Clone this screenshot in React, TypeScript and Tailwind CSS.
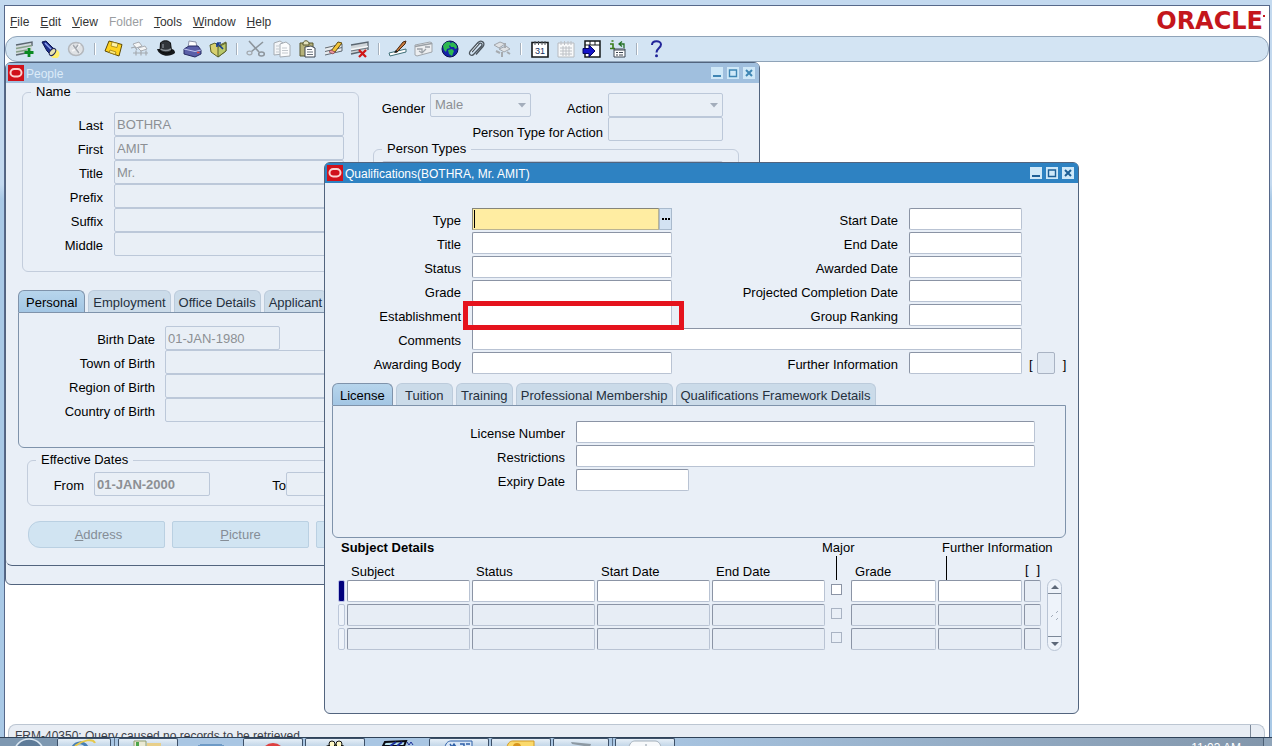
import type { ReactNode } from 'react';

const FIELD =
  'block h-[22px] w-full rounded-xs border border-[#b9c3d3] border-t-[#8b94a5] border-l-[#8b94a5] bg-white px-[2px] outline-none';
const LOCKED =
  'block h-6 rounded-xs border border-[#bcc8d9] bg-[#e9eff6] px-[2px] text-[#8c8f94] outline-none';

const qualLeft = ['Type', 'Title', 'Status', 'Grade', 'Establishment', 'Comments', 'Awarding Body'];
const qualRight: Record<string, string> = {
  Type: 'Start Date',
  Title: 'End Date',
  Status: 'Awarded Date',
  Grade: 'Projected Completion Date',
  Establishment: 'Group Ranking',
  'Awarding Body': 'Further Information',
};

const slug = (s: string) => s.toLowerCase().replace(/\W+/g, '-');

function Icon({ children }: { children: ReactNode }) {
  return (
    <svg width="20" height="18" viewBox="0 0 20 18" fill="none" aria-hidden="true">
      {children}
    </svg>
  );
}

const toolGroups: { name: string; art: ReactNode }[][] = [
  [
    {
      name: 'New',
      art: (
        <>
          <path d="M2 5 18 2v10L2 15z" fill="#d3dade" />
          <path d="M2 5 18 2v4M2 15l10-2" stroke="#5b6670" strokeWidth="1.400" />
          <path d="M2 8.500 18 5.500M2 12l11-2" stroke="#86a08a" strokeWidth="1.400" />
          <path d="M15 8v9M10.500 12.500h9" stroke="#0b8a22" strokeWidth="2.800" />
        </>
      ),
    },
    {
      name: 'Find',
      art: (
        <>
          <circle cx="15" cy="14" r="4.500" fill="#ffee6a" />
          <path d="m2 2 4-1 8 8-4 5-3-3z" fill="#1e2f8c" stroke="#0c1550" />
          <path d="m5 3 7 7" stroke="#8fa4f0" strokeWidth="1.500" />
          <ellipse cx="12.500" cy="12" rx="2.500" ry="4" transform="rotate(40 12.500 12)" fill="#e8e3b0" stroke="#20285c" />
        </>
      ),
    },
    {
      name: 'Show Navigator',
      art: (
        <>
          <ellipse cx="10" cy="9" rx="7.500" ry="6.500" fill="#dfe2e5" stroke="#b4b8bd" strokeWidth="1.500" />
          <path d="m6 5 4 4-4 2M14 4l-4 5 4 4" stroke="#f6f7f8" strokeWidth="1.600" />
          <path d="m7 5 6 8M9 9l3-4" stroke="#a3a8ae" strokeWidth="1.500" />
        </>
      ),
    },
  ],
  [
    {
      name: 'Save',
      art: (
        <>
          <path d="M5 1 18 4.500 15 16 1 11z" fill="#ffd21f" stroke="#5d4a05" />
          <path d="m8 2 6 1.500-1 4-6-1.500z" fill="#fff3a6" stroke="#94760c" strokeWidth=".7" />
          <path d="m6 10 6 2-.8 2.500-6-2z" fill="#fbe67a" stroke="#94760c" strokeWidth=".7" />
        </>
      ),
    },
    {
      name: 'Next Step',
      art: (
        <>
          <path d="m3 4 6-2 3 4-6 2zM8 8l7-2 2 3-6 2z" fill="#f4f5f6" stroke="#a9adb3" />
          <path d="m1 8 4-1 2 3M3 13h15M6 10.500v5M11 10.500v5M16 10.500v5" stroke="#a4a9af" strokeWidth="1.200" />
        </>
      ),
    },
    {
      name: 'Switch Responsibility',
      art: (
        <>
          <path d="M1 9c2 7 12 9 18 4 0-2-1-4-4-4z" fill="#15181b" />
          <path d="M4 11 4.500 3c2-3 8-3 10 0l1 8c-3 3-8 2-11.500 0z" fill="#30353a" stroke="#08090a" />
          <path d="M4.500 9c3 2 7 2 10.500 0" stroke="#899097" strokeWidth="1.500" />
          <path d="M7 4v4" stroke="#9aa1a8" />
        </>
      ),
    },
    {
      name: 'Print',
      art: (
        <>
          <path d="m7 1 7 1 1 6H6z" fill="#fff" stroke="#8d93a8" />
          <path d="m2 9 5-3h9l3 4v4l-6 3-11-3z" fill="#5a5fa8" stroke="#272b63" />
          <path d="m2 9 11 2.500L19 10" stroke="#c2c6ef" />
          <path d="M15 12.500h2.500" stroke="#e5483f" strokeWidth="1.500" />
        </>
      ),
    },
    {
      name: 'Close Form',
      art: (
        <>
          <path d="m2 5 5-2 3 3 8-4v9l-8 6-7-5z" fill="#d8d06e" stroke="#59612c" />
          <path d="m10 7 8-4v8l-8 6z" fill="#b9c86a" stroke="#59612c" />
          <path d="m9 3 6 6M9 3h4M9 3v4" stroke="#1b3f8f" strokeWidth="1.700" />
        </>
      ),
    },
  ],
  [
    {
      name: 'Cut',
      art: (
        <>
          <path d="m3 1 10 11M17 2 5 12" stroke="#8d959c" strokeWidth="1.600" />
          <ellipse cx="3.500" cy="13" rx="2.500" ry="1.800" stroke="#a5abb1" strokeWidth="1.300" />
          <ellipse cx="15.500" cy="14" rx="2.800" ry="2" stroke="#8d959c" strokeWidth="1.500" />
        </>
      ),
    },
    {
      name: 'Copy',
      art: (
        <>
          <path d="M2 3 8 1l3 2v11l-9 1z" fill="#f4f6f8" stroke="#a5acb3" />
          <path d="m8 4 6-2 4 3v11l-10 1z" fill="#fbfcfd" stroke="#a5acb3" />
          <path d="M4 6h3M4 9h3M4 12h3M10 8h5M10 10.500h6M10 13h6" stroke="#c4c9ce" />
        </>
      ),
    },
    {
      name: 'Paste',
      art: (
        <>
          <path d="M2 3h13v13H2z" fill="#b5b27a" stroke="#56572f" />
          <path d="M5 3c1-3 5-3 6 0v2H5z" fill="#e3e2bd" stroke="#56572f" />
          <path d="m7 7 6-1 4 2v9H7z" fill="#fff" stroke="#3d4550" />
          <path d="M9 9.500h5M9 12h6M9 14.500h6" stroke="#6b7480" />
        </>
      ),
    },
    {
      name: 'Clear Record',
      art: (
        <>
          <path d="m1 7 17-4v8L1 15z" fill="#e8ebee" />
          <path d="m1 8 17-4v7M1 11.500l17-4M1 15l17-4" stroke="#5d6872" />
          <path d="m7 11 7-9 4 1-7 9z" fill="#f1c43c" stroke="#5f4a12" />
          <path d="m5 12 2-2 4 2-2 2z" fill="#eb9aa3" stroke="#8a4048" strokeWidth=".7" />
        </>
      ),
    },
    {
      name: 'Delete Record',
      art: (
        <>
          <path d="m1 5 17-3v9L1 14z" fill="#cfd5d9" />
          <path d="m1 5 17-3v8M1 14l9-2" stroke="#5b6670" strokeWidth="1.300" />
          <path d="m1 9.500 17-3" stroke="#f5f7f8" strokeWidth="1.500" />
          <path d="m1 11 17-3" stroke="#68737d" />
          <path d="m9 10 7 7m0-7-7 7" stroke="#cf1616" strokeWidth="2.300" />
        </>
      ),
    },
  ],
  [
    {
      name: 'Edit Field',
      art: (
        <>
          <path d="m1 13 17-4v3L2 16z" fill="#fff" stroke="#3f6f77" />
          <path d="m7 12 8-10 3-1-1 3-8 8z" fill="#c7793c" stroke="#4a2a12" />
          <path d="m6 13 2-3 2 2z" fill="#1a1a1a" />
        </>
      ),
    },
    {
      name: 'Zoom',
      art: (
        <>
          <path d="m1 5 15-3 2 1v9L3 16l-2-1z" fill="#eceef0" stroke="#9fa5ab" />
          <path d="M1 6.500 18 3.500M3 9l5 0v4M5 11l3 2 4-4M11 7h5" stroke="#9aa0a6" strokeWidth="1.300" />
        </>
      ),
    },
    {
      name: 'Translations',
      art: (
        <>
          <circle cx="10" cy="9" r="8" fill="#1523a8" stroke="#0a1050" />
          <path d="M3 6c1-3 4-5 7-4l1 2-2 2 1 2-3 1-1 3-2-2zM12 2c3 1 5 3 5 6l-2 1-1-2-3 0-1-2zM8 10l4-1 2 2-2 5-3-2z" fill="#2cb850" />
        </>
      ),
    },
    {
      name: 'Attachments',
      art: (
        <>
          <path
            d="m6 12 7-8c1.500-2 4 0 2.500 2L8 14c-2 2.500-6 1-4-2.500l8-9c3-3 8 0 5 4l-7 8"
            stroke="#4b545c"
            strokeWidth="1.300"
          />
          <path d="m5 12 7-8" stroke="#f4f7f9" strokeWidth=".8" />
        </>
      ),
    },
    {
      name: 'Folder Tools',
      art: (
        <>
          <path d="m2 5 6-3 5 2-6 4zM7 9l7-3 4 3-6 3z" fill="#dfe2e5" stroke="#a0a5ab" />
          <path d="M13 3v5M10 12v5M15 12l3 2M4 11l4 2" stroke="#a6abb0" strokeWidth="2" />
        </>
      ),
    },
  ],
  [
    {
      name: 'Calendar',
      art: (
        <>
          <path d="M2 2.500h16V17H2z" fill="#fff" stroke="#15181b" strokeWidth="1.600" />
          <path d="M5 1v4M8.500 1v4M12 1v4M15 1v4" stroke="#4e555c" />
          <text x="5" y="14" fontSize="9" fontFamily="Liberation Sans, sans-serif" fill="#14305f">
            31
          </text>
        </>
      ),
    },
    {
      name: 'Planner',
      art: (
        <>
          <path d="M2 3h16v14H2z" fill="#f8f9fa" stroke="#b6babf" />
          <path d="M5 1v4M8.500 1v4M12 1v4M15 1v4M4 8h12M4 11h12M4 14h12M7 6v10M10 6v10M13 6v10" stroke="#bcc0c5" />
        </>
      ),
    },
    {
      name: 'Export',
      art: (
        <>
          <path d="M3 1h15v16H3z" fill="#fff" stroke="#15181b" strokeWidth="1.500" />
          <path d="M3 5h15M8 1v4M13 1v4" stroke="#15181b" />
          <path d="M1 8.500h6V5l6 6-6 6v-3.500H1z" fill="#1414c8" stroke="#050560" />
        </>
      ),
    },
    {
      name: 'Information',
      art: (
        <>
          <path d="M2 4h3v4M2 8.500h5M3.500 1h2" stroke="#3b7d18" strokeWidth="1.600" />
          <path d="M16 8V4h-5m3-2.500L11 4l3 2.500" stroke="#247026" strokeWidth="1.300" />
          <path d="M6 9h11v8H6z" fill="#fff" stroke="#3d4752" />
          <path d="M6 10h11M8 12.500h2M11 12.500h4M8 15h2M11 15h4" stroke="#3d4752" strokeWidth="1.200" />
        </>
      ),
    },
  ],
  [
    {
      name: 'Help',
      art: (
        <>
          <path d="M6 5c0-5 9-5 9-.5 0 3.500-4.500 3.500-4.500 8" stroke="#22259a" strokeWidth="2" />
          <circle cx="10.500" cy="15.800" r="1.500" fill="#22259a" />
        </>
      ),
    },
  ],
];

function OracleMark() {
  return (
    <svg width="16" height="16" viewBox="0 0 16 16" aria-hidden="true">
      <rect width="16" height="16" fill="#d0111b" />
      <rect x="2.500" y="4" width="11" height="7.500" rx="3.700" fill="none" stroke="#fbd3d1" strokeWidth="2" />
    </svg>
  );
}

function TitleBar({ title, active }: { title: string; active?: boolean }) {
  const tone = active ? 'bg-[#2e82c2] text-white' : 'bg-[#a0bfde] text-[#dcebf8]';
  const glyph = active ? '#1d5f96' : '#3f86b4';
  return (
    <div className={`flex h-5 items-center gap-[2px] rounded-t-sm px-[2px] text-[12px] ${tone}`}>
      <OracleMark />
      <h2 className="flex-1 pt-[2px]">{title}</h2>
      <div className="flex gap-1 pr-[2px]">
        <button aria-label="Minimize" className="h-3 w-3 bg-[#cfe8f8]">
          <svg width="12" height="12" viewBox="0 0 12 12"><path d="M2 9h8" stroke={glyph} strokeWidth="2" /></svg>
        </button>
        <button aria-label="Maximize" className="h-3 w-3 bg-[#cfe8f8]">
          <svg width="12" height="12" viewBox="0 0 12 12"><path d="M2.500 3h7v6.500h-7zM2 3h8" fill="none" stroke={glyph} strokeWidth="1.400" /></svg>
        </button>
        <button aria-label="Close" className="h-3 w-3 bg-[#cfe8f8]">
          <svg width="12" height="12" viewBox="0 0 12 12"><path d="m3 3 6 6m0-6-6 6" stroke={glyph} strokeWidth="2" /></svg>
        </button>
      </div>
    </div>
  );
}

function Tabs({ items }: { items: string[] }) {
  return (
    <div role="tablist" className="flex gap-[3px]">
      {items.map((t, i) => (
        <button
          key={t}
          role="tab"
          aria-selected={i === 0}
          className={
            i === 0
              ? 'h-[22px] rounded-t-md border border-b-0 border-[#7f93ab] bg-linear-to-b from-[#b7d5ec] to-[#a3c6e4] px-[7px] pt-[2px] text-black'
              : 'h-[22px] min-w-[57px] rounded-t-md border border-b-0 border-[#bccbdb] bg-[#cbdbe9] px-1 pt-[2px] text-[#25303d]'
          }
        >
          {t}
        </button>
      ))}
    </div>
  );
}

function LockedSelect({ id, value }: { id: string; value: string }) {
  return (
    <div className="relative">
      <select id={id} disabled defaultValue={value} className={`${LOCKED} w-full appearance-none pl-1 opacity-100`}>
        <option>{value}</option>
      </select>
      <svg className="absolute top-[10px] right-[5px]" width="8" height="5" viewBox="0 0 8 5" aria-hidden="true">
        <path d="M0 0h8L4 4.500z" fill="#a3adbb" />
      </svg>
    </div>
  );
}

function PeopleWindow() {
  return (
    <section className="absolute top-0 left-0 w-[755px] rounded-t-md rounded-b-md border border-[#52647e] bg-[#e9eff7]">
      <TitleBar title="People" />
      <div className="rounded-b-md border-b border-[#52647e] pb-[17px]">
        <div className="flex">
          <fieldset className="mt-[1px] ml-4 h-[188px] w-[337px] rounded-md border border-[#c3cddc] pl-2">
            <legend className="px-[5px] leading-4">Name</legend>
            <div className="grid grid-cols-[72px_230px] gap-x-[11px] pt-3">
              {[['Last', 'BOTHRA'], ['First', 'AMIT'], ['Title', 'Mr.'], ['Prefix', ''], ['Suffix', ''], ['Middle', '']].map(([label, value]) => (
                <div key={label} className="contents">
                  <label htmlFor={`name-${slug(label)}`} className="flex h-6 items-center justify-end pt-1">{label}</label>
                  <input id={`name-${slug(label)}`} disabled defaultValue={value} className={LOCKED} />
                </div>
              ))}
            </div>
          </fieldset>
          <div className="flex-1">
            <div className="grid grid-cols-[66px_101px_67px_115px] gap-x-[5px] pt-[10px]">
              <label htmlFor="gender" className="flex h-6 items-center justify-end pt-2">Gender</label>
              <LockedSelect id="gender" value="Male" />
              <label htmlFor="action" className="flex h-6 items-center justify-end pt-2">Action</label>
              <LockedSelect id="action" value="" />
              <label htmlFor="ptype-action" className="col-span-3 flex h-6 items-center justify-end pt-2">Person Type for Action</label>
              <input id="ptype-action" disabled className={LOCKED} />
            </div>
            <fieldset className="ml-[14px] h-[130px] w-[366px] rounded-md border border-[#c3cddc] pl-2">
              <legend className="px-[5px] leading-4">Person Types</legend>
              <input aria-label="Person Types" disabled className={`${LOCKED} mt-1 w-[341px]`} />
            </fieldset>
          </div>
        </div>

        <div className="mx-3 mt-[18px]">
          <Tabs items={['Personal', 'Employment', 'Office Details', 'Applicant']} />
          <div className="grid h-[136px] grid-cols-[136px_230px] content-start gap-x-[10px] rounded-b-md border border-[#7f93ab] pt-[13px]">
            {[['Birth Date', '01-JAN-1980'], ['Town of Birth', ''], ['Region of Birth', ''], ['Country of Birth', '']].map(([label, value], i) => (
              <div key={label} className="contents">
                <label htmlFor={slug(label)} className="flex h-6 items-center justify-end pt-1">{label}</label>
                <input id={slug(label)} disabled defaultValue={value} className={i === 0 ? `${LOCKED} w-[115px]` : LOCKED} />
              </div>
            ))}
          </div>
        </div>

        <fieldset className="mx-[21px] mt-1 h-[54px] rounded-md border border-[#c3cddc] pl-2">
          <legend className="px-[5px] leading-4">Effective Dates</legend>
          <div className="flex items-start pt-1">
            <label htmlFor="from" className="flex h-6 w-[48px] items-center justify-end pt-1">From</label>
            <input id="from" disabled defaultValue="01-JAN-2000" className={`${LOCKED} ml-[10px] w-[116px] font-bold`} />
            <label htmlFor="to" className="flex h-6 w-[76px] items-center justify-end pt-1">To</label>
            <input id="to" disabled className={`${LOCKED} w-[116px]`} />
          </div>
        </fieldset>

        <div className="mx-[22px] mt-[15px] flex gap-[7px]">
          {['Address', 'Picture', ''].map((b, i) => (
            <button
              key={b}
              disabled
              aria-label={b || 'More'}
              className={`h-[27px] w-[137px] shrink-0 border border-[#bad0e2] bg-[#d1e4f2] text-[#858d96] ${i === 0 ? 'rounded-l-xl rounded-r-xs pl-1' : 'rounded-xs'}`}
            >
              <u>{b[0]}</u>{b.slice(1)}
            </button>
          ))}
        </div>
      </div>
      <div className="h-[18px]" />
    </section>
  );
}

function QualificationFields() {
  return (
    <div className="grid grid-cols-[136px_200px_215px_113px_auto] gap-x-[11px] pt-[25px]">
      {qualLeft.map((label) => {
        const id = `q-${slug(label)}`;
        const right = qualRight[label];
        return (
          <div key={label} className="contents">
            <label htmlFor={id} className="col-start-1 flex h-6 items-center justify-end pt-[2px]">{label}</label>
            {label === 'Type' ? (
              <div className="relative flex">
                <input
                  id={id}
                  className="h-[22px] w-[187px] border border-[#b9b393] border-t-[#85857a] border-l-[#85857a] bg-[#ffeda2] px-1 outline-none"
                />
                <span className="absolute top-[2px] left-[2px] h-[18px] w-px bg-black" />
                <button aria-label="List of Values" className="flex h-[22px] w-[13px] items-center justify-center border border-[#a9bacd] bg-[#d3e2f2]">
                  <svg width="8" height="2" viewBox="0 0 8 2" aria-hidden="true"><path d="M0 0h2v2H0zM3 0h2v2H3zM6 0h2v2H6z" fill="#000" /></svg>
                </button>
              </div>
            ) : (
              <div className={label === 'Comments' ? 'col-span-3' : 'relative'}>
                <input id={id} className={FIELD} />
                {label === 'Establishment' && (
                  <div className="pointer-events-none absolute -top-[3px] -left-[9px] z-10 h-[29px] w-[221px] border-5 border-[#e5131d]" />
                )}
              </div>
            )}
            {right && (
              <>
                <label htmlFor={`q-${slug(right)}`} className="flex h-6 items-center justify-end pt-[2px]">{right}</label>
                <input id={`q-${slug(right)}`} className={FIELD} />
              </>
            )}
            {label === 'Awarding Body' && (
              <div className="-ml-1 flex h-6 gap-1">
                <span className="pt-[5px]">[</span>
                <input aria-label="Flexfield" disabled className="h-[22px] w-[18px] rounded-xs border border-[#a9b3c3] bg-[#e1e9f3]" />
                <span className="pt-[5px] pl-1">]</span>
              </div>
            )}
          </div>
        );
      })}
    </div>
  );
}

function SubjectTable() {
  const cols = ['Subject', 'Status', 'Start Date', 'End Date'];
  return (
    <div className="flex items-end gap-[5px] pt-[1px] pl-[13px]">
      <table className="w-[704px] table-fixed border-collapse text-left">
        <colgroup>
          <col className="w-[8px]" />
          <col className="w-[125px]" />
          <col className="w-[125px]" />
          <col className="w-[115px]" />
          <col className="w-[115px]" />
          <col className="w-[24px]" />
          <col className="w-[87px]" />
          <col className="w-[86px]" />
          <col className="w-[19px]" />
        </colgroup>
        <thead>
          <tr className="h-[17px] leading-4 whitespace-nowrap">
            <th colSpan={4} className="p-0 pl-[3px] font-bold">Subject Details</th>
            <th colSpan={3} className="p-0 pl-[111px] font-normal">Major</th>
            <th colSpan={2} className="p-0 pl-[5px] font-normal">Further Information</th>
          </tr>
          <tr className="h-6 leading-4 whitespace-nowrap">
            <th className="p-0" />
            {cols.map((c) => (
              <th key={c} className="p-0 pt-[7px] pl-[5px] font-normal">{c}</th>
            ))}
            <th className="p-0"><div className="ml-[10px] h-6 w-px bg-black" /></th>
            <th className="p-0 pt-[7px] pl-[5px] font-normal">Grade</th>
            <th className="p-0"><div className="ml-[9px] h-6 w-px bg-black" /></th>
            <th className="p-0 pt-1 font-normal"><div className="flex w-[17px] justify-between pl-[2px]"><span>[</span><span>]</span></div></th>
          </tr>
        </thead>
        <tbody>
          {[0, 1, 2].map((r) => {
            const cell = r === 0 ? FIELD : `${FIELD} bg-[#e7edf5]!`;
            return (
              <tr key={r} className="h-6 align-top">
                <td className="p-0">
                  <div className={r === 0 ? 'h-[22px] w-[7px] rounded-xs border border-[#b9bfe8] bg-[#00007c]' : 'h-[22px] w-[7px] rounded-xs border border-[#bcc7d9] bg-[#eef3fa]'} />
                </td>
                {cols.map((c) => (
                  <td key={c} className="p-0 px-[1px]"><input aria-label={`${c} ${r + 1}`} disabled={r > 0} className={cell} /></td>
                ))}
                <td className="p-0 pt-1 pl-[5px]">
                  <input
                    type="checkbox"
                    aria-label={`Major ${r + 1}`}
                    disabled={r > 0}
                    className={`block h-[11px] w-[11px] appearance-none border ${r === 0 ? 'border-[#8b94a5] bg-white' : 'border-[#a9b3c3]'}`}
                  />
                </td>
                <td className="p-0 px-[1px]"><input aria-label={`Grade ${r + 1}`} disabled={r > 0} className={cell} /></td>
                <td className="p-0 px-[1px]"><input aria-label={`Further Information ${r + 1}`} disabled={r > 0} className={cell} /></td>
                <td className="p-0 px-[1px]"><input aria-label={`Flexfield ${r + 1}`} disabled className={`${FIELD} bg-[#e7edf5]!`} /></td>
              </tr>
            );
          })}
        </tbody>
      </table>
      <div className="mb-[1px] flex h-[72px] w-[15px] flex-col items-center justify-between rounded-full border border-[#b9c4d4] bg-[#eef3fa]">
        <button aria-label="Scroll up" className="flex h-[14px] w-full items-center justify-center border-b border-[#7c8898]">
          <svg width="8" height="4" viewBox="0 0 8 4"><path d="M0 4h8L4 0z" fill="#5d6878" /></svg>
        </button>
        <svg width="8" height="11" viewBox="0 0 8 11" aria-hidden="true"><path d="m0 7 2-2M5 3l2-2M5 10l2-2" stroke="#a3adbb" /></svg>
        <button aria-label="Scroll down" className="flex h-[14px] w-full items-center justify-center border-t border-[#7c8898]">
          <svg width="8" height="4" viewBox="0 0 8 4"><path d="M0 0h8L4 4z" fill="#5d6878" /></svg>
        </button>
      </div>
    </div>
  );
}

function QualificationsWindow() {
  return (
    <section className="absolute top-[100px] left-[319px] w-[755px] rounded-md border border-[#52647e] bg-[#e9eff7] pb-[61px]">
      <TitleBar title="Qualifications(BOTHRA, Mr. AMIT)" active />
      <QualificationFields />
      <div className="mr-3 ml-[7px] pt-[7px]">
        <Tabs items={['License', 'Tuition', 'Training', 'Professional Membership', 'Qualifications Framework Details']} />
        <div className="grid h-[133px] grid-cols-[232px_459px] content-start gap-x-[11px] rounded-b-md border border-[#7f93ab] pt-[15px]">
          {['License Number', 'Restrictions', 'Expiry Date'].map((label) => (
            <div key={label} className="contents">
              <label htmlFor={slug(label)} className="flex h-6 items-center justify-end pt-[2px]">{label}</label>
              <div className={label === 'Expiry Date' ? 'w-[113px]' : ''}>
                <input id={slug(label)} className={FIELD} />
              </div>
            </div>
          ))}
        </div>
      </div>
      <SubjectTable />
    </section>
  );
}

const TASK = 'h-full overflow-hidden rounded-t-xs border border-b-0 border-[#3d5068] bg-linear-to-b from-[#e6eff7] to-[#c3d6e8] flex justify-center';

function Taskbar() {
  return (
    <footer className="flex h-[9px] overflow-hidden border-t border-[#2f4258] bg-linear-to-r from-[#a9c6e3] via-[#a9c6e3] to-[#8296ab]">
      <button aria-label="Start" className="flex w-[57px] shrink-0 justify-center overflow-hidden bg-[#7e98b1]">
        <svg width="32" height="8" viewBox="0 0 32 8"><circle cx="16" cy="16" r="15" fill="#5f7c99" stroke="#dbe7f2" strokeWidth="1.500" /></svg>
      </button>
      <div className={`${TASK} w-[54px]`}>
        <svg width="26" height="8" viewBox="0 0 26 8"><path d="M2 8C5 3 12 2 16 8" stroke="#477fb5" strokeWidth="3" fill="none" /><path d="M4 7C12 1 22-1 24 4" stroke="#e6c84c" strokeWidth="2" fill="none" /></svg>
      </div>
      <div className="mr-[3px] h-full w-[4px] border-r border-[#5b7089]" />
      <div className={`${TASK} w-[60px]`}>
        <svg width="30" height="8" viewBox="0 0 30 8"><path d="M1 2h12v6H1z" fill="#e9e9d4" stroke="#93a070" /><path d="M3 3h3v5H3z" fill="#4da64a" /><path d="M14 4h14v4H14z" fill="#e8cf8a" /></svg>
      </div>
      <div className="flex w-[65px] justify-center pt-1">
        <svg width="26" height="4" viewBox="0 0 26 4"><path d="M0 3h26v1H0zM2 2h22v1H2z" fill="#6d9ac6" /></svg>
      </div>
      <div className={`${TASK} w-[60px]`}>
        <svg width="26" height="8" viewBox="0 0 26 8"><circle cx="13" cy="16" r="12" fill="#dd4040" /></svg>
      </div>
      <div className="w-[2px]" />
      <div className={`${TASK} w-[60px]`}>
        <svg width="26" height="8" viewBox="0 0 26 8"><path d="M3 8c4-3 18-3 20 0" fill="#59713a" stroke="#111" /><circle cx="10" cy="5" r="3" fill="#fff8c5" stroke="#111" /><circle cx="17" cy="5" r="3" fill="#fff8c5" stroke="#111" /></svg>
      </div>
      <div className="flex w-[64px] justify-center">
        <svg width="36" height="8" viewBox="0 0 36 8"><path d="M6 4 27 3l-2 5H4z" fill="#b9e3f0" stroke="#0a0a12" strokeWidth="2" /><path d="m11 8 6-4m1 4 5-4" stroke="#1c2f9a" strokeWidth="2" /><path d="m28 4 2 3 2-3 2 3" stroke="#1c2f9a" fill="none" /></svg>
      </div>
      <div className={`${TASK} w-[60px]`}>
        <svg width="30" height="8" viewBox="0 0 30 8"><path d="M1 8c1-5 4-6 6-6h21v6z" fill="#d8e6f6" stroke="#2f60a8" /><path d="m6 5 2 3 2-3 2 3M16 5h4v3M22 5h4" stroke="#2f60a8" strokeWidth="1.500" fill="none" /></svg>
      </div>
      <div className="w-[2px]" />
      <div className={`${TASK} w-[60px]`}>
        <svg width="30" height="8" viewBox="0 0 30 8"><path d="M1 8c1-5 4-6 6-6h21v6z" fill="#fbd96b" stroke="#d29a24" /><circle cx="11" cy="8" r="4" fill="#d8951c" /></svg>
      </div>
      <div className="w-[2px]" />
      <div className={`${TASK} w-[56px]`}>
        <svg width="26" height="8" viewBox="0 0 26 8"><path d="m3 3 20 2-1 3-18-3z" fill="#8d99a3" /></svg>
      </div>
      <div className="mr-[2px] w-[4px] border-r border-[#5b7089]" />
      <div className={`${TASK} w-[60px]`}>
        <svg width="34" height="8" viewBox="0 0 34 8"><path d="M1 8c1-5 4-6 6-6h20c3 0 5 2 6 6z" fill="#f7f9fb" stroke="#a3afba" /><path d="M18 5v3" stroke="#8b98a4" /></svg>
      </div>
      <div className="flex-1" />
      <time className="mt-[4px] mr-[22px] shrink-0 text-[12px] leading-3 text-white">11:03 AM</time>
      <button aria-label="Show desktop" className="w-[9px] shrink-0 border-l border-[#4d6075] bg-[#90a5ba]" />
    </footer>
  );
}

export default function App() {
  return (
    <div className="flex h-screen flex-col overflow-hidden bg-[#b9d3ec] font-['Liberation_Sans',Arial,sans-serif] text-[13px] leading-4 text-black">
      <div className="flex min-h-0 flex-1 flex-col bg-linear-to-b from-[#c3d9ef] from-25% to-[#a9c9e6] to-27% pt-[5px] pr-[2px] pl-1">
        <div className="flex min-h-0 flex-1 flex-col overflow-hidden border border-b-0 border-[#56688a] bg-white">
          <header className="flex h-[30px] items-center justify-between pr-1 pl-[5px]">
            <nav className="flex gap-[11px] pt-[2px] text-[12px] text-[#333]">
              {['File', 'Edit', 'View', 'Folder', 'Tools', 'Window', 'Help'].map((m) => (
                <button key={m} className={m === 'Folder' ? 'text-[#9a9da1]' : ''}>
                  {m === 'Folder' ? m : <><u>{m[0]}</u>{m.slice(1)}</>}
                </button>
              ))}
            </nav>
            <div className="flex items-start font-['DejaVu_Sans',sans-serif] text-[24px] leading-7 font-bold text-[#c4161c]">
              ORACLE<span className="mt-2 h-[2px] w-[2px] bg-[#c4161c]" />
            </div>
          </header>

          <div role="toolbar" className="flex h-[26px] shrink-0 items-center rounded-xl border border-[#8fa3b8] bg-[#d3e4f3] pl-[5px]">
            {toolGroups.map((group, g) => (
              <div key={g} className="flex items-center">
                {g > 0 && <div className="flex w-3 justify-center"><div className="h-3 w-[2px] border-r border-l border-r-white border-l-[#a5b1be]" /></div>}
                {group.map((tool) => (
                  <button key={tool.name} aria-label={tool.name} className="flex w-[26px] justify-center">
                    <Icon>{tool.art}</Icon>
                  </button>
                ))}
              </div>
            ))}
          </div>

          <main className="relative min-h-0 flex-1">
            <PeopleWindow />
            <QualificationsWindow />
          </main>

          <div className="mr-1 ml-[3px] flex h-[13px] shrink-0 justify-between overflow-hidden rounded-t-lg border border-b-0 border-[#bcc6d2] bg-[#e8edf4] text-[12px] text-[#3c4048]">
            <p className="pt-[3px] pl-[6px]">FRM-40350: Query caused no records to be retrieved.</p>
            <div className="w-[14px] border-l border-[#7c8898]" />
          </div>
        </div>
      </div>
      <Taskbar />
    </div>
  );
}
